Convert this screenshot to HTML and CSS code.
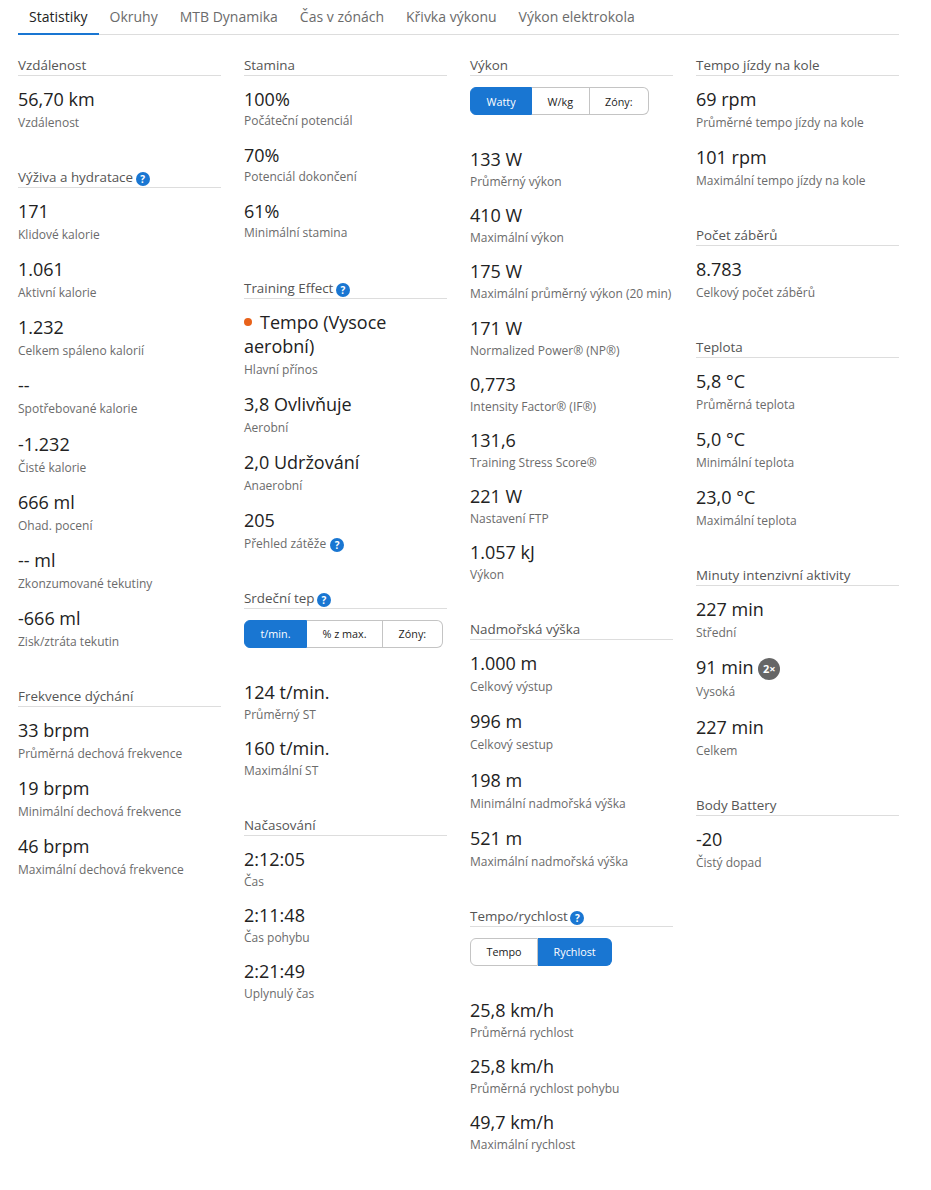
FILE: index.html
```html
<!DOCTYPE html>
<html lang="cs">
<head>
    <meta charset="UTF-8">
    <meta name="viewport" content="width=device-width, initial-scale=1.0">
    <title>Statistiky</title>
    <link rel="stylesheet" href="styles.css">
</head>
<body>
    <div class="page">
        <nav class="tabs">
            <a class="tab active">Statistiky</a>
            <a class="tab">Okruhy</a>
            <a class="tab">MTB Dynamika</a>
            <a class="tab">Čas v zónách</a>
            <a class="tab">Křivka výkonu</a>
            <a class="tab">Výkon elektrokola</a>
        </nav>

        <div class="columns">
            <div class="column">
                <section class="section">
                    <h3>Vzdálenost</h3>
                    <div class="stat"><div class="value">56,70 km</div><div class="label">Vzdálenost</div></div>
                </section>
                <section class="section">
                    <h3>Výživa a hydratace <span class="help">?</span></h3>
                    <div class="stat"><div class="value">171</div><div class="label">Klidové kalorie</div></div>
                    <div class="stat"><div class="value">1.061</div><div class="label">Aktivní kalorie</div></div>
                    <div class="stat"><div class="value">1.232</div><div class="label">Celkem spáleno kalorií</div></div>
                    <div class="stat"><div class="value">--</div><div class="label">Spotřebované kalorie</div></div>
                    <div class="stat"><div class="value">-1.232</div><div class="label">Čisté kalorie</div></div>
                    <div class="stat"><div class="value">666 ml</div><div class="label">Ohad. pocení</div></div>
                    <div class="stat"><div class="value">-- ml</div><div class="label">Zkonzumované tekutiny</div></div>
                    <div class="stat"><div class="value">-666 ml</div><div class="label">Zisk/ztráta tekutin</div></div>
                </section>
                <section class="section">
                    <h3>Frekvence dýchání</h3>
                    <div class="stat"><div class="value">33 brpm</div><div class="label">Průměrná dechová frekvence</div></div>
                    <div class="stat"><div class="value">19 brpm</div><div class="label">Minimální dechová frekvence</div></div>
                    <div class="stat"><div class="value">46 brpm</div><div class="label">Maximální dechová frekvence</div></div>
                </section>
            </div>

            <div class="column">
                <section class="section stamina">
                    <h3>Stamina</h3>
                    <div class="stat percent"><div class="value">100%</div><div class="label">Počáteční potenciál</div></div>
                    <div class="stat percent"><div class="value">70%</div><div class="label">Potenciál dokončení</div></div>
                    <div class="stat percent"><div class="value">61%</div><div class="label">Minimální stamina</div></div>
                </section>
                <section class="section">
                    <h3>Training Effect <span class="help">?</span></h3>
                    <div class="stat wrapped"><div class="value"><span class="dot"></span>Tempo (Vysoce aerobní)</div><div class="label">Hlavní přínos</div></div>
                    <div class="stat"><div class="value">3,8 Ovlivňuje</div><div class="label">Aerobní</div></div>
                    <div class="stat"><div class="value">2,0 Udržování</div><div class="label">Anaerobní</div></div>
                    <div class="stat"><div class="value">205</div><div class="label">Přehled zátěže <span class="help">?</span></div></div>
                </section>
                <section class="section">
                    <h3>Srdeční tep <span class="help">?</span></h3>
                    <div class="btn-group">
                        <button class="btn selected">t/min.</button>
                        <button class="btn">% z max.</button>
                        <button class="btn">Zóny:</button>
                    </div>
                    <div class="stat tight"><div class="value">124 t/min.</div><div class="label">Průměrný ST</div></div>
                    <div class="stat tight"><div class="value">160 t/min.</div><div class="label">Maximální ST</div></div>
                </section>
                <section class="section">
                    <h3>Načasování</h3>
                    <div class="stat tight"><div class="value">2:12:05</div><div class="label">Čas</div></div>
                    <div class="stat tight"><div class="value">2:11:48</div><div class="label">Čas pohybu</div></div>
                    <div class="stat tight"><div class="value">2:21:49</div><div class="label">Uplynulý čas</div></div>
                </section>
            </div>

            <div class="column">
                <section class="section">
                    <h3>Výkon</h3>
                    <div class="btn-group">
                        <button class="btn selected">Watty</button>
                        <button class="btn">W/kg</button>
                        <button class="btn">Zóny:</button>
                    </div>
                    <div class="stat tight"><div class="value">133 W</div><div class="label">Průměrný výkon</div></div>
                    <div class="stat tight"><div class="value">410 W</div><div class="label">Maximální výkon</div></div>
                    <div class="stat tight"><div class="value">175 W</div><div class="label">Maximální průměrný výkon (20 min)</div></div>
                    <div class="stat tight"><div class="value">171 W</div><div class="label">Normalized Power® (NP®)</div></div>
                    <div class="stat tight"><div class="value">0,773</div><div class="label">Intensity Factor® (IF®)</div></div>
                    <div class="stat tight"><div class="value">131,6</div><div class="label">Training Stress Score®</div></div>
                    <div class="stat tight"><div class="value">221 W</div><div class="label">Nastavení FTP</div></div>
                    <div class="stat tight"><div class="value">1.057 kJ</div><div class="label">Výkon</div></div>
                </section>
                <section class="section">
                    <h3>Nadmořská výška</h3>
                    <div class="stat"><div class="value">1.000 m</div><div class="label">Celkový výstup</div></div>
                    <div class="stat"><div class="value">996 m</div><div class="label">Celkový sestup</div></div>
                    <div class="stat"><div class="value">198 m</div><div class="label">Minimální nadmořská výška</div></div>
                    <div class="stat"><div class="value">521 m</div><div class="label">Maximální nadmořská výška</div></div>
                </section>
                <section class="section">
                    <h3>Tempo/rychlost <span class="help">?</span></h3>
                    <div class="btn-group">
                        <button class="btn">Tempo</button>
                        <button class="btn selected">Rychlost</button>
                    </div>
                    <div class="stat tight"><div class="value">25,8 km/h</div><div class="label">Průměrná rychlost</div></div>
                    <div class="stat tight"><div class="value">25,8 km/h</div><div class="label">Průměrná rychlost pohybu</div></div>
                    <div class="stat tight"><div class="value">49,7 km/h</div><div class="label">Maximální rychlost</div></div>
                </section>
            </div>

            <div class="column">
                <section class="section">
                    <h3>Tempo jízdy na kole</h3>
                    <div class="stat"><div class="value">69 rpm</div><div class="label">Průměrné tempo jízdy na kole</div></div>
                    <div class="stat"><div class="value">101 rpm</div><div class="label">Maximální tempo jízdy na kole</div></div>
                </section>
                <section class="section">
                    <h3>Počet záběrů</h3>
                    <div class="stat"><div class="value">8.783</div><div class="label">Celkový počet záběrů</div></div>
                </section>
                <section class="section">
                    <h3>Teplota</h3>
                    <div class="stat"><div class="value">5,8 °C</div><div class="label">Průměrná teplota</div></div>
                    <div class="stat"><div class="value">5,0 °C</div><div class="label">Minimální teplota</div></div>
                    <div class="stat"><div class="value">23,0 °C</div><div class="label">Maximální teplota</div></div>
                </section>
                <section class="section">
                    <h3>Minuty intenzivní aktivity</h3>
                    <div class="stat"><div class="value">227 min</div><div class="label">Střední</div></div>
                    <div class="stat"><div class="value">91 min <span class="badge">2×</span></div><div class="label">Vysoká</div></div>
                    <div class="stat"><div class="value">227 min</div><div class="label">Celkem</div></div>
                </section>
                <section class="section">
                    <h3>Body Battery</h3>
                    <div class="stat"><div class="value">-20</div><div class="label">Čistý dopad</div></div>
                </section>
            </div>
        </div>
    </div>
</body>
</html>
```

FILE: styles.css
```css
body {
    margin: 0;
    background-color: #fff;
    color: #222;
    font-family: "Open Sans", sans-serif;
}
.page {
    padding: 0 32px 0 18px;
}
.tabs {
    display: flex;
    height: 35px;
    box-sizing: border-box;
    border-bottom: 1px solid #ddd;
}
.tab {
    height: 35px;
    box-sizing: border-box;
    padding: 7px 11px 0;
    font-size: 14px;
    line-height: 20px;
    color: #6b6b6b;
}
.tab.active {
    color: #222;
    border-bottom: 2px solid #1976d2;
}
.columns {
    display: grid;
    grid-template-columns: repeat(4, 203px);
    column-gap: 23px;
    padding-top: 19px;
}
.section {
    margin-bottom: 33.9px;
}
.section.stamina {
    margin-bottom: 34.8px;
}
h3 {
    margin: 0 0 11px;
    height: 22px;
    box-sizing: border-box;
    padding-top: 1px;
    border-bottom: 1px solid #ddd;
    font-size: 13.4px;
    font-weight: 400;
    line-height: 20px;
    color: #555;
}
.help {
    display: inline-block;
    width: 14px;
    height: 14px;
    margin-left: -1px;
    border-radius: 50%;
    background-color: #1976d2;
    color: #fff;
    font-size: 10px;
    font-weight: 700;
    line-height: 14px;
    text-align: center;
    vertical-align: -1px;
}
.label .help {
    margin-left: 1px;
}
.stat {
    margin-bottom: 13.2px;
}
.value {
    font-size: 18px;
    line-height: 24px;
    color: #222;
}
.label {
    margin-top: 3px;
    font-size: 12px;
    line-height: 18px;
    color: #6b6b6b;
}
.stat.tight {
    margin-bottom: 12.2px;
}
.stat.tight .label {
    margin-top: 2px;
}
.stat.percent {
    margin-bottom: 13px;
}
.stat.percent .label {
    margin-top: 1px;
}
.stat.wrapped {
    margin-bottom: 12.9px;
}
.dot {
    display: inline-block;
    width: 8px;
    height: 8px;
    margin-right: 8px;
    border-radius: 50%;
    background-color: #e8621a;
    vertical-align: 3px;
}
.badge {
    display: inline-block;
    width: 22px;
    height: 22px;
    border-radius: 50%;
    background-color: #666;
    color: #fff;
    font-size: 11px;
    font-weight: 700;
    line-height: 22px;
    text-align: center;
    vertical-align: 1px;
}
.btn-group {
    display: flex;
    width: fit-content;
    margin-bottom: 32px;
    border-radius: 6px;
}
.btn {
    height: 28px;
    padding: 0 15.5px;
    border: 1px solid #c4c4c4;
    border-left: none;
    background-color: #fff;
    color: #222;
    font-family: inherit;
    font-size: 10.8px;
    font-weight: 500;
    white-space: nowrap;
}
.btn:first-child {
    border-left: 1px solid #c4c4c4;
    border-radius: 6px 0 0 6px;
}
.btn:last-child {
    border-radius: 0 6px 6px 0;
}
.btn.selected {
    background-color: #1976d2;
    border-color: #1976d2;
    color: #fff;
}
```
